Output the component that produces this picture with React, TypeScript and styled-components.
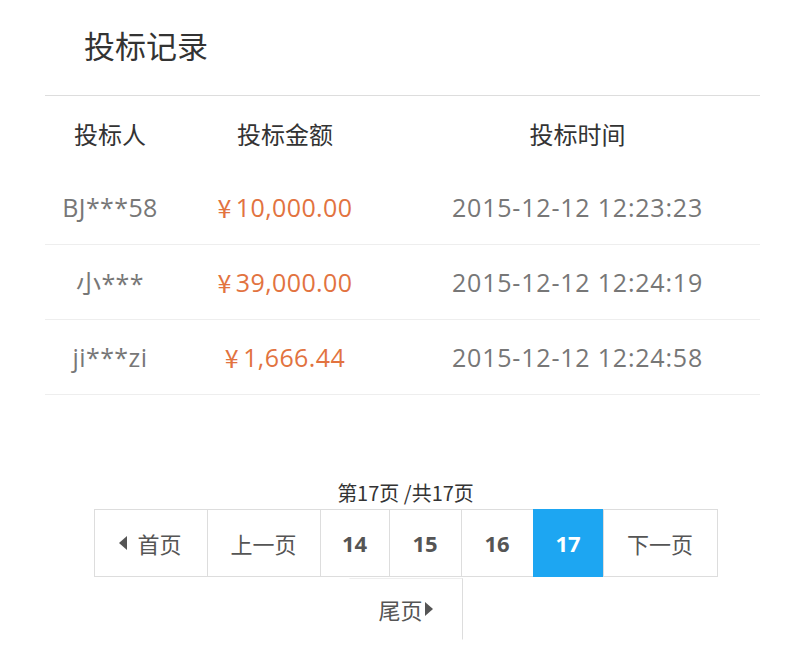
import * as React from "react";
import styled, { createGlobalStyle } from "styled-components";

const GlobalStyle = createGlobalStyle`
  html, body {
    margin: 0;
    padding: 0;
    background: #fff;
  }
  body {
    font-family: "Open Sans", "Noto Sans CJK SC", sans-serif;
  }
`;

interface Bid {
  name: string;
  amount: string;
  time: string;
}

const bids: Bid[] = [
  { name: "BJ***58", amount: "10,000.00", time: "2015-12-12 12:23:23" },
  { name: "小***", amount: "39,000.00", time: "2015-12-12 12:24:19" },
  { name: "ji***zi", amount: "1,666.44", time: "2015-12-12 12:24:58" },
];

const Page = styled.div`
  width: 800px;
  height: 659px;
  overflow: hidden;
  padding: 0 40px 0 45px;
  box-sizing: border-box;
`;

const Title = styled.h2`
  margin: 0;
  height: 95px;
  padding-left: 39px;
  font-family: "Noto Sans CJK SC", sans-serif;
  font-size: 31px;
  font-weight: 400;
  line-height: 90px;
  color: #333;
  border-bottom: 1px solid #ddd;
`;

const Table = styled.div`
  display: grid;
  grid-template-columns: 130px 220px 1fr;
`;

const Row = styled.div<{ $head?: boolean }>`
  display: contents;
  & > div {
    height: 74px;
    border-bottom: ${({ $head }) => ($head ? "none" : "1px solid #eee")};
    color: ${({ $head }) => ($head ? "#333" : "#777")};
    font-family: ${({ $head }) =>
      $head ? '"Noto Sans CJK SC", sans-serif' : '"Open Sans", "Noto Sans CJK SC", sans-serif'};
    font-size: ${({ $head }) => ($head ? "24px" : "25px")};
    letter-spacing: ${({ $head }) => ($head ? "0" : "0.4px")};
  }
`;

const Cell = styled.div<{ $accent?: boolean; $wide?: boolean }>`
  display: flex;
  align-items: center;
  justify-content: center;
  && {
    color: ${({ $accent }) => ($accent ? "#e2733f" : undefined)};
    letter-spacing: ${({ $wide }) => ($wide ? "0.8px" : undefined)};
  }
`;

const Yen = styled.span`
  font-family: "Noto Sans CJK SC", sans-serif;
  margin-right: 4px;
`;

const Pager = styled.div`
  margin-top: 86px;
  display: flex;
  flex-direction: column;
  align-items: center;
`;

const PageInfo = styled.div`
  font-family: "Noto Sans CJK SC", sans-serif;
  font-size: 20px;
  color: #333;
  line-height: 24px;
  margin-bottom: 4px;
  margin-left: 6px;
`;

const PageList = styled.div`
  width: 625px;
  display: flex;
  flex-wrap: wrap;
  justify-content: center;
  margin-left: 7px;
`;

const PageItem = styled.div<{ $w: number; $active?: boolean; $bold?: boolean }>`
  width: ${({ $w }) => $w}px;
  height: 68px;
  box-sizing: border-box;
  border: 1px solid #ddd;
  margin-left: -1px;
  display: flex;
  align-items: center;
  justify-content: center;
  gap: 10px;
  font-family: ${({ $bold }) =>
    $bold ? '"Open Sans", sans-serif' : '"Noto Sans CJK SC", sans-serif'};
  font-size: 22px;
  font-weight: ${({ $bold }) => ($bold ? 700 : 400)};
  color: ${({ $active }) => ($active ? "#fff" : "#555")};
  background: ${({ $active }) => ($active ? "#1da6f2" : "#fff")};
  border-color: ${({ $active }) => ($active ? "#1da6f2" : "#ddd")};
`;

const LastItem = styled(PageItem)`
  height: 62px;
  gap: 2px;
  border-left-color: transparent;
  border-bottom-color: transparent;
  border-top-color: #eee;
  margin-top: 1px;
`;

const Arrow = styled.span<{ $dir: "left" | "right" }>`
  width: 0;
  height: 0;
  border-top: 7px solid transparent;
  border-bottom: 7px solid transparent;
  ${({ $dir }) =>
    $dir === "left"
      ? "border-right: 8px solid #555;"
      : "border-left: 8px solid #555;"}
`;

export default function App() {
  return (
    <>
      <GlobalStyle />
      <Page>
        <Title>投标记录</Title>
        <Table>
          <Row $head>
            <Cell>投标人</Cell>
            <Cell>投标金额</Cell>
            <Cell>投标时间</Cell>
          </Row>
          {bids.map((b) => (
            <Row key={b.time}>
              <Cell>{b.name}</Cell>
              <Cell $accent>
                <Yen>¥</Yen>
                {b.amount}
              </Cell>
              <Cell $wide>{b.time}</Cell>
            </Row>
          ))}
        </Table>
        <Pager>
          <PageInfo>第17页 /共17页</PageInfo>
          <PageList>
            <PageItem $w={114}>
              <Arrow $dir="left" />
              首页
            </PageItem>
            <PageItem $w={114}>上一页</PageItem>
            <PageItem $w={70} $bold>14</PageItem>
            <PageItem $w={73} $bold>15</PageItem>
            <PageItem $w={73} $bold>16</PageItem>
            <PageItem $w={71} $bold $active>17</PageItem>
            <PageItem $w={115}>下一页</PageItem>
            <LastItem $w={114}>
              尾页
              <Arrow $dir="right" />
            </LastItem>
          </PageList>
        </Pager>
      </Page>
    </>
  );
}
